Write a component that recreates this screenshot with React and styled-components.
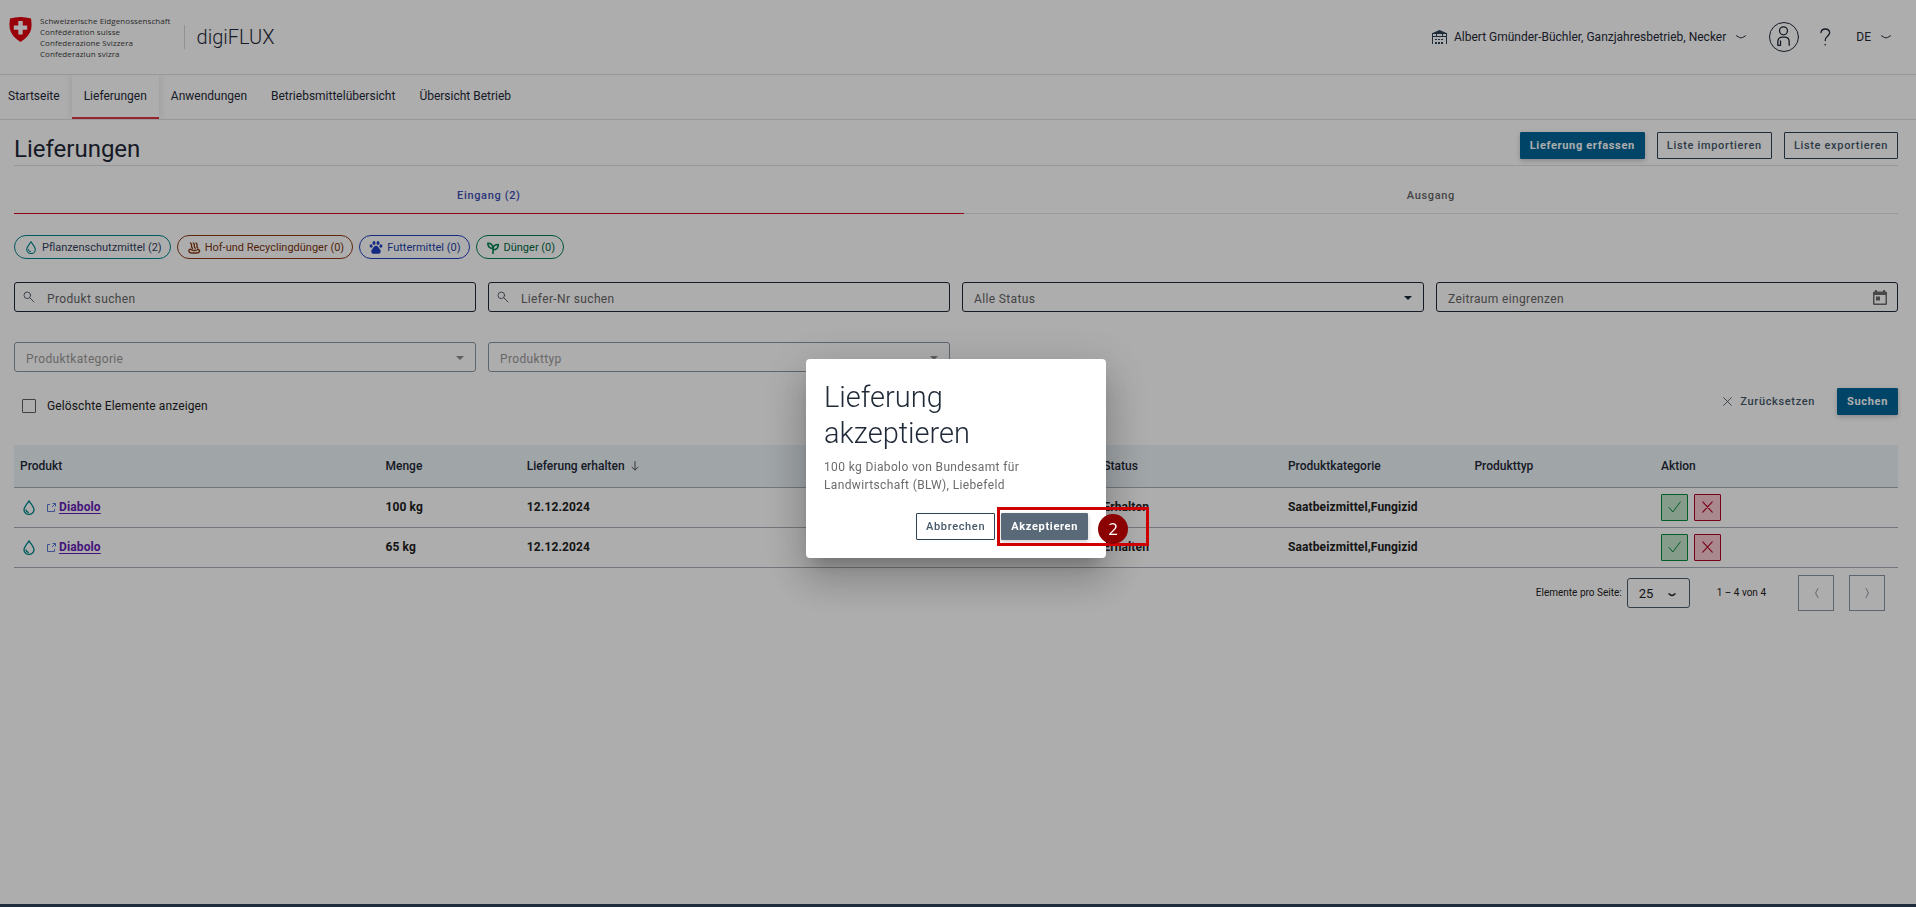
import React from "react";
import styled, { createGlobalStyle, css } from "styled-components";

const GlobalStyle = createGlobalStyle`
  *, *::before, *::after { box-sizing: border-box; }
  body { margin: 0; background: #fff; color: #1f2937; font: 400 12px/18px Roboto, "Liberation Sans", sans-serif; }
  button, input, select { font: inherit; color: inherit; }
  h1, h2, p { margin: 0; font-weight: 400; }
`;

const Page = styled.div`
  min-height: 100vh;
  display: flex;
  flex-direction: column;
`;

const Header = styled.header`
  display: flex;
  align-items: center;
  height: 75px;
  padding: 0 25px 0 9px;
  border-bottom: 1px solid #dfe0e2;
`;

const Brand = styled.a`
  display: flex;
  align-items: flex-start;
  gap: 8px;
  color: #3d3d3d;
  text-decoration: none;
  svg { margin-top: 2px; }
`;

const BrandNames = styled.span`
  display: flex;
  flex-direction: column;
  font: 400 8px/11px "Open Sans", sans-serif;
  letter-spacing: 0.01em;
`;

const AppName = styled.span`
  margin-left: 13px;
  padding-left: 12px;
  border-left: 1px solid #d5d6d8;
  font-size: 20px;
  font-weight: 300;
  line-height: 24px;
`;

const HeaderTools = styled.div`
  display: flex;
  align-items: center;
  margin-left: auto;
`;

const ToolButton = styled.button`
  display: flex;
  align-items: center;
  gap: 10px;
  margin: 0 0 0 ${(p) => p.$space || 0}px;
  padding: 0;
  border: 0;
  background: none;
  color: #1f2937;
`;

const FarmLabel = styled.span`
  display: flex;
  align-items: center;
  gap: 7px;
`;

const Nav = styled.nav`
  display: flex;
  height: 45px;
  padding-left: 8px;
  border-bottom: 1px solid #dfe0e2;
`;

const NavLink = styled.a`
  display: flex;
  align-items: center;
  padding: 0 12px;
  color: #1f2937;
  text-decoration: none;
  border-bottom: 2px solid transparent;
  &:first-child { padding-left: 0; }
  ${(p) => p.$active && css`
    border-bottom-color: #dc3545;
    box-shadow: 0 0 8px rgba(0, 0, 0, 0.12);
    clip-path: inset(0 -8px 0 -8px);
  `}
`;

const Main = styled.main`
  flex: 1;
  padding: 12px 18px 0 14px;
`;

const TitleBar = styled.div`
  display: flex;
  justify-content: space-between;
  align-items: flex-start;
  height: 34px;
  border-bottom: 1px solid #dfe0e2;
`;

const PageTitle = styled.h1`
  font-size: 24px;
  line-height: 34px;
  color: #1f2937;
`;

const ButtonGroup = styled.div`
  display: flex;
  justify-content: flex-end;
  gap: ${(p) => p.$gap}px;
`;

const looks = {
  primary: css`background: #006699; border-color: #006699; color: #fff; font-weight: 700; box-shadow: 0 2px 5px rgba(0, 0, 0, 0.2);`,
  outline: css`background: transparent; border-color: #2f4356; color: #46596b;`,
  dark: css`background: #596978; border-color: #596978; color: #fff; font-weight: 700; box-shadow: 0 2px 5px rgba(0, 0, 0, 0.2);`,
  plain: css`background: none; border-color: transparent; color: #46596b;`,
};

const Button = styled.button`
  display: flex;
  align-items: center;
  gap: 8px;
  height: 27px;
  padding: 0 9px;
  border: 1px solid;
  border-radius: 1px;
  font-size: 11px;
  font-weight: 500;
  line-height: 16px;
  letter-spacing: 0.06em;
  white-space: nowrap;
  ${(p) => looks[p.$look]}
`;

const Tabs = styled.div`
  display: flex;
  margin-top: 12px;
`;

const Tab = styled.button`
  flex: 1 1 auto;
  height: 36px;
  padding: 0;
  border: 0;
  border-bottom: 1px solid ${(p) => (p.$active ? "#dc0018" : "#dfe4e9")};
  background: none;
  font-size: 11px;
  font-weight: 500;
  letter-spacing: 0.06em;
  color: ${(p) => (p.$active ? "#3f51b5" : "#666")};
`;

const Chips = styled.div`
  display: flex;
  gap: 6px;
  margin-top: 21px;
`;

const Chip = styled.button`
  display: flex;
  align-items: center;
  gap: 4px;
  height: 24px;
  padding: 1px 8px 0 9px;
  border: 1px solid ${(p) => p.$line};
  border-radius: 12px;
  background: none;
  font-size: 11px;
  color: ${(p) => p.$ink};
  svg { color: ${(p) => p.$line}; }
`;

const Filters = styled.form`
  display: grid;
  grid-template-columns: repeat(4, 1fr);
  gap: 30px 12px;
  margin-top: 23px;
`;

const Field = styled.label`
  display: flex;
  align-items: center;
  height: 30px;
  padding: 0 10px 0 ${(p) => (p.$search ? 8 : 11)}px;
  border: 1px solid ${(p) => (p.$disabled ? "#8a97a3" : "#1f2937")};
  border-radius: 3px;
  color: ${(p) => (p.$disabled ? "#9a9a9a" : "#666")};
  input, select {
    flex: 1;
    min-width: 0;
    padding: 3px 0 0;
    margin-left: ${(p) => (p.$search ? 12 : 0)}px;
    border: 0;
    background: none;
    appearance: none;
    letter-spacing: 0.03em;
    line-height: 18px;
    opacity: 1;
  }
  input::placeholder { color: inherit; opacity: 1; }
`;

const SelectCaret = styled.svg`
  margin: 2px 1px 0 0;
  color: ${(p) => (p.$disabled ? "#8c8c8c" : "#1f2937")};
`;

const ActionsRow = styled.div`
  display: flex;
  justify-content: space-between;
  margin-top: 16px;
`;

const CheckLabel = styled.label`
  display: flex;
  align-items: center;
  gap: 11px;
  margin: 9px 0 0 8px;
  letter-spacing: 0.01em;
  color: #212121;
  input {
    width: 14px;
    height: 14px;
    margin: 0;
    appearance: none;
    border: 1px solid #5f5f5f;
    border-radius: 1px;
  }
`;

const Table = styled.table`
  width: 100%;
  margin-top: 30px;
  border-collapse: collapse;
  table-layout: fixed;
  color: #212121;
  th {
    height: 42px;
    padding: 0 6px;
    background: #ecf3f7;
    border-bottom: 1px solid #a9b0b8;
    text-align: left;
    font-weight: 500;
    color: #1f2937;
  }
  td {
    height: 40px;
    padding: 0 6px;
    border-bottom: 1px solid #a9b0b8;
    font-weight: 700;
    letter-spacing: 0.01em;
  }
`;

const Column = styled.col`
  width: ${(p) => p.$share}%;
`;

const Cell = styled.div`
  display: flex;
  align-items: center;
  gap: ${(p) => p.$gap}px;
`;

const ProductLink = styled.a`
  color: #6420b4;
  text-underline-offset: 2px;
`;

const IconButton = styled.button`
  display: flex;
  align-items: center;
  justify-content: center;
  width: 27px;
  height: 27px;
  padding: 0;
  border: 1px solid ${(p) => (p.$accept ? "#008a3e" : "#b00025")};
  border-radius: 1px;
  background: ${(p) => (p.$accept ? "#c3e6cb" : "#f9cbd1")};
  color: ${(p) => (p.$accept ? "#008a3e" : "#b00025")};
`;

const Paginator = styled.div`
  display: flex;
  align-items: center;
  justify-content: flex-end;
  padding: 7px 13px 0 0;
  font-size: 10px;
  color: #212121;
`;

const PageSize = styled.label`
  display: flex;
  align-items: center;
  gap: 5px;
`;

const SizeBox = styled.span`
  display: flex;
  align-items: center;
  width: 63px;
  height: 30px;
  padding: 0 13px 0 11px;
  border: 1px solid #4b5a68;
  border-radius: 3px;
  select {
    flex: 1;
    min-width: 0;
    padding: 3px 0 0;
    border: 0;
    background: none;
    appearance: none;
    font-size: 13px;
  }
  svg { margin-top: 4px; }
`;

const Range = styled.span`
  margin: 0 32px 0 27px;
`;

const PageButton = styled.button`
  display: flex;
  align-items: center;
  justify-content: center;
  width: 36px;
  height: 36px;
  padding: 0;
  border: 1px solid #8a97a3;
  background: none;
  color: #8a97a3;
  & + & { margin-left: 15px; }
`;

const Footer = styled.footer`
  height: 3px;
  background: #2f4158;
`;

const Backdrop = styled.div`
  position: fixed;
  inset: 0;
  display: flex;
  align-items: center;
  justify-content: center;
  padding: 10px 4px 0 0;
  background: rgba(0, 0, 0, 0.32);
`;

const Dialog = styled.section`
  position: relative;
  width: 300px;
  padding: 20px 18px 18px;
  border-radius: 4px;
  background: #fff;
  box-shadow: 0 11px 15px -7px rgba(0, 0, 0, 0.2), 0 24px 38px 3px rgba(0, 0, 0, 0.14), 0 9px 46px 8px rgba(0, 0, 0, 0.12);
`;

const DialogTitle = styled.h2`
  font-size: 29px;
  font-weight: 300;
  line-height: 36px;
  color: #1f2937;
`;

const DialogText = styled.p`
  margin: 7px 0 19px;
  letter-spacing: 0.03em;
  color: #6b6b6b;
`;

const Highlight = styled.div`
  position: absolute;
  left: 191px;
  top: 148px;
  width: 152px;
  height: 39px;
  border: 3px solid #d00000;
  pointer-events: none;
`;

const StepBadge = styled.span`
  position: absolute;
  left: 98px;
  top: 4px;
  display: flex;
  align-items: center;
  justify-content: center;
  width: 30px;
  height: 30px;
  border-radius: 50%;
  background: #8b0000;
  color: #fff;
  font-family: "Open Sans", sans-serif;
  font-size: 17px;
`;

const stroke = { fill: "none", stroke: "currentColor", strokeLinecap: "round", strokeLinejoin: "round" };

const Shield = () => (
  <svg width="23" height="25" viewBox="0 0 23 25" aria-hidden="true">
    <path d="M1 1.500Q6 0 11.500 0T22 1.500Q23 7 22.300 11.500Q21 19 11.500 25Q2 19 .7 11.500Q0 7 1 1.500Z" fill="#e3000f" />
    <path d="M9.300 4h4.400v4.400h4.500v4.400h-4.500v4.600h-4.400v-4.600H4.800V8.400h4.500z" fill="#fff" />
  </svg>
);

const FarmIcon = () => (
  <svg width="15" height="14" viewBox="0 0 15 14" aria-hidden="true" fill="#2f4356">
    <path d="M0 3.200 7.500 0 15 3.200V4H0z" />
    <path d="M0 3h1v11H0zM14 3h1v11h-1zM4 4h1v2H4zM10 4h1v2h-1zM1 6h13v1H1zM3 9h2v1H3zM6 9h2v1H6zM9 9h2v1H9zM3 12h2v2H3zM6 12h2v2H6zM9 12h2v2H9z" />
  </svg>
);

const Chevron = () => (
  <svg width="10" height="4" viewBox="0 0 10 4" aria-hidden="true" {...stroke}>
    <path d="M.5 .8 3.500 2.500Q5 3.300 6.500 2.500L9.500 .8" />
  </svg>
);

const SmallChevron = () => (
  <svg width="8" height="4" viewBox="0 0 8 4" aria-hidden="true" {...stroke} strokeWidth="1.400">
    <path d="M1 .8Q4 4.200 7 .8" />
  </svg>
);

const PersonIcon = () => (
  <svg width="30" height="30" viewBox="0 0 30 30" aria-hidden="true" {...stroke}>
    <circle cx="15" cy="15" r="14.500" />
    <circle cx="14.500" cy="8.800" r="4" strokeWidth="1.300" />
    <path d="M8.800 23.300v-3.300q0-4.800 4.700-4.800h2q4.700 0 4.700 4.800v3.300M8.800 23.300h2.700v-4.300" strokeWidth="1.300" />
  </svg>
);

const HelpIcon = () => (
  <svg width="11" height="18" viewBox="0 0 11 18" aria-hidden="true" {...stroke} strokeWidth="1.300">
    <path d="M1 4.500Q1.500 1 5.300 1T9.700 4.600C9.700 8 5.200 8 5.200 12.500M5.200 16.500v.4" />
  </svg>
);

const Drop = ({ width, height }) => (
  <svg width={width} height={height} viewBox="0 0 12 15" aria-hidden="true" {...stroke} strokeWidth="1.300" color="#00858c">
    <path d="M6 .8C4 4 1 6.800 1 9.700a5 4.700 0 0 0 10 0C11 6.800 8 4 6 .8ZM3 9.800q.3 2.200 2.300 2.500" />
  </svg>
);

const CompostIcon = () => (
  <svg width="14" height="12" viewBox="0 0 14 12" aria-hidden="true" {...stroke} strokeWidth="1.400">
    <path d="M3.500 1q1.500 1.200 1 2.500t1 2.700M6.300 1q1.500 1.200 1 2.500t1 2.700M9 1q1.500 1.200 1 2.500t.7 2.500M3.300 7.200Q1.200 8 2 9.700 2.700 11 4.500 11h5q2.500 0 3-1.500T11 7.500Q8.500 9 6 8.300 4.800 8 3.300 7.200Z" />
  </svg>
);

const PawIcon = () => (
  <svg width="14" height="13" viewBox="0 0 13 13" aria-hidden="true" fill="currentColor">
    <ellipse cx="4.500" cy="2" rx="1.500" ry="1.900" />
    <ellipse cx="8.500" cy="2" rx="1.500" ry="1.900" />
    <ellipse cx="1.600" cy="5" rx="1.500" ry="1.700" />
    <ellipse cx="11.400" cy="5" rx="1.500" ry="1.700" />
    <path d="M6.500 4.800c2.200 0 2.700 2.200 3.900 3.500s1.200 4.500-1.200 4.500H3.800c-2.400 0-2.400-3.200-1.200-4.500S4.300 4.800 6.500 4.800Z" />
  </svg>
);

const SproutIcon = () => (
  <svg width="14" height="12" viewBox="0 0 14 12" aria-hidden="true" {...stroke} strokeWidth="1.600">
    <path d="M7 11.300V6.500Q2 6.300 1.800 1.200 6.500 1 7 6M7 7.800q5.300 0 5.300-5.300Q7.500 2.500 7 6.500" />
  </svg>
);

const SearchIcon = () => (
  <svg width="12" height="12" viewBox="0 0 12 12" aria-hidden="true" {...stroke} color="#5b6470">
    <circle cx="4.300" cy="4.300" r="3.300" />
    <path d="m7 7 4 4" />
  </svg>
);

const CalendarIcon = () => (
  <svg width="14" height="15" viewBox="0 0 14 15" aria-hidden="true" fill="#6b6b6b">
    <path fillRule="evenodd" d="M2 0h2v1.500h6V0h2v1.500h.8q1.200 0 1.200 1.200v11.100q0 1.200-1.200 1.200H1.200Q0 15 0 13.800V2.700Q0 1.500 1.200 1.500H2zM1.500 5v8.500h11V5z" />
    <path d="M3 6.500h4v4H3z" />
  </svg>
);

const Cross = ({ width, height }) => (
  <svg width={width} height={height} viewBox="0 0 10 10" preserveAspectRatio="none" aria-hidden="true" {...stroke}>
    <path d="m.7.7 8.600 8.600M9.300.7.700 9.300" />
  </svg>
);

const Check = () => (
  <svg width="13" height="12" viewBox="0 0 13 12" aria-hidden="true" {...stroke}><path d="M1 6.500 4.800 11 12.300 1" /></svg>
);

const ExternalIcon = () => (
  <svg width="9" height="9" viewBox="0 0 9 9" aria-hidden="true" fill="none" stroke="#5a78d2">
    <path d="M3 1.500H.5v7h7V6M5.500 .5h3V3.500M8.500.5 5 4" />
  </svg>
);

const ArrowDown = () => (
  <svg width="8" height="10" viewBox="0 0 8 10" aria-hidden="true" {...stroke} color="#555"><path d="M4 .5v8.500M1 6.200 4 9l3-2.800" /></svg>
);

const Angle = ({ flip }) => (
  <svg width="5" height="10" viewBox="0 0 5 10" aria-hidden="true" {...stroke}>
    <path d={flip ? "M1 .5 3 4Q3.500 5 3 6L1 9.500" : "M4 .5 2 4Q1.500 5 2 6L4 9.500"} />
  </svg>
);

const navItems = ["Startseite", "Lieferungen", "Anwendungen", "Betriebsmittelübersicht", "Übersicht Betrieb"];

const chips = [
  { label: "Pflanzenschutzmittel (2)", line: "#00858c", ink: "#33415c", icon: <Drop width={14} height={13} /> },
  { label: "Hof-und Recyclingdünger (0)", line: "#8a3a12", ink: "#7a3510", icon: <CompostIcon /> },
  { label: "Futtermittel (0)", line: "#1f3fc0", ink: "#1f3fa8", icon: <PawIcon /> },
  { label: "Dünger (0)", line: "#00804f", ink: "#00693f", icon: <SproutIcon /> },
];

const columnShares = [19.4, 7.5, 30.6, 9.8, 9.9, 9.9, 12.9];

const deliveries = [
  { product: "Diabolo", amount: "100 kg", date: "12.12.2024", status: "Erhalten", category: "Saatbeizmittel,Fungizid" },
  { product: "Diabolo", amount: "65 kg", date: "12.12.2024", status: "Erhalten", category: "Saatbeizmittel,Fungizid" },
];

const SearchField = ({ label }) => (
  <Field $search>
    <SearchIcon />
    <input type="text" placeholder={label} aria-label={label} />
  </Field>
);

const SelectField = ({ label, disabled }) => (
  <Field $disabled={disabled}>
    <select aria-label={label} disabled={disabled}><option>{label}</option></select>
    <SelectCaret $disabled={disabled} width="8" height="4" viewBox="0 0 8 4" aria-hidden="true">
      <path d="M0 0h8L4 4z" fill="currentColor" />
    </SelectCaret>
  </Field>
);

export default function App() {
  return (
    <>
      <GlobalStyle />
      <Page>
        <Header>
          <Brand href="#">
            <Shield />
            <BrandNames>
              <span>Schweizerische Eidgenossenschaft</span>
              <span>Confédération suisse</span>
              <span>Confederazione Svizzera</span>
              <span>Confederaziun svizra</span>
            </BrandNames>
          </Brand>
          <AppName>digiFLUX</AppName>
          <HeaderTools>
            <ToolButton>
              <FarmLabel><FarmIcon />Albert Gmünder-Büchler, Ganzjahresbetrieb, Necker</FarmLabel>
              <Chevron />
            </ToolButton>
            <ToolButton $space={23} aria-label="Profil"><PersonIcon /></ToolButton>
            <ToolButton $space={21} aria-label="Hilfe"><HelpIcon /></ToolButton>
            <ToolButton $space={25}>DE<Chevron /></ToolButton>
          </HeaderTools>
        </Header>
        <Nav>
          {navItems.map((item) => (
            <NavLink key={item} href="#" $active={item === "Lieferungen"}>{item}</NavLink>
          ))}
        </Nav>
        <Main>
          <TitleBar>
            <PageTitle>Lieferungen</PageTitle>
            <ButtonGroup $gap={12}>
              <Button $look="primary">Lieferung erfassen</Button>
              <Button $look="outline">Liste importieren</Button>
              <Button $look="outline">Liste exportieren</Button>
            </ButtonGroup>
          </TitleBar>
          <Tabs role="tablist">
            <Tab role="tab" aria-selected="true" $active>Eingang (2)</Tab>
            <Tab role="tab" aria-selected="false">Ausgang</Tab>
          </Tabs>
          <Chips>
            {chips.map((c) => (
              <Chip key={c.label} $line={c.line} $ink={c.ink}>{c.icon}{c.label}</Chip>
            ))}
          </Chips>
          <Filters>
            <SearchField label="Produkt suchen" />
            <SearchField label="Liefer-Nr suchen" />
            <SelectField label="Alle Status" />
            <Field>
              <input type="text" placeholder="Zeitraum eingrenzen" aria-label="Zeitraum eingrenzen" />
              <CalendarIcon />
            </Field>
            <SelectField label="Produktkategorie" disabled />
            <SelectField label="Produkttyp" disabled />
          </Filters>
          <ActionsRow>
            <CheckLabel><input type="checkbox" />Gelöschte Elemente anzeigen</CheckLabel>
            <ButtonGroup $gap={12}>
              <Button $look="plain"><Cross width={9} height={9} />Zurücksetzen</Button>
              <Button $look="primary">Suchen</Button>
            </ButtonGroup>
          </ActionsRow>
          <Table>
            <colgroup>{columnShares.map((share, i) => <Column key={i} $share={share} />)}</colgroup>
            <thead>
              <tr>
                <th>Produkt</th>
                <th>Menge</th>
                <th><Cell $gap={6}>Lieferung erhalten <ArrowDown /></Cell></th>
                <th>Status</th>
                <th>Produktkategorie</th>
                <th>Produkttyp</th>
                <th>Aktion</th>
              </tr>
            </thead>
            <tbody>
              {deliveries.map((d, i) => (
                <tr key={i}>
                  <td>
                    <Cell $gap={9}>
                      <Drop width={18} height={15} />
                      <Cell $gap={3}><ExternalIcon /><ProductLink href="#">{d.product}</ProductLink></Cell>
                    </Cell>
                  </td>
                  <td>{d.amount}</td>
                  <td>{d.date}</td>
                  <td>{d.status}</td>
                  <td>{d.category}</td>
                  <td />
                  <td>
                    <Cell $gap={6}>
                      <IconButton $accept aria-label="Akzeptieren"><Check /></IconButton>
                      <IconButton aria-label="Ablehnen"><Cross width={11} height={12} /></IconButton>
                    </Cell>
                  </td>
                </tr>
              ))}
            </tbody>
          </Table>
          <Paginator>
            <PageSize>
              Elemente pro Seite:
              <SizeBox><select><option>25</option></select><SmallChevron /></SizeBox>
            </PageSize>
            <Range>1 – 4 von 4</Range>
            <PageButton aria-label="Vorherige Seite"><Angle /></PageButton>
            <PageButton aria-label="Nächste Seite"><Angle flip /></PageButton>
          </Paginator>
        </Main>
        <Footer />
      </Page>
      <Backdrop>
        <Dialog role="dialog" aria-modal="true" aria-labelledby="dialog-title">
          <DialogTitle id="dialog-title">Lieferung akzeptieren</DialogTitle>
          <DialogText>100 kg Diabolo von Bundesamt für Landwirtschaft (BLW), Liebefeld</DialogText>
          <ButtonGroup $gap={6}>
            <Button $look="outline">Abbrechen</Button>
            <Button $look="dark">Akzeptieren</Button>
          </ButtonGroup>
          <Highlight><StepBadge>2</StepBadge></Highlight>
        </Dialog>
      </Backdrop>
    </>
  );
}
